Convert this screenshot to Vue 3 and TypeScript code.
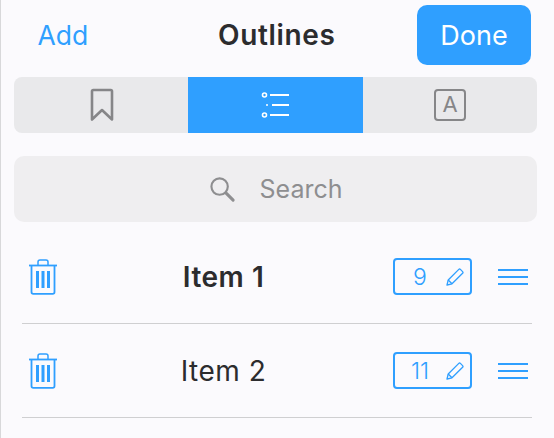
<script setup lang="ts">
const items = [
  { name: 'Item 1', count: 9, bold: true },
  { name: 'Item 2', count: 11, bold: false },
];
</script>

<template>
  <div class="page">
    <header class="top">
      <span class="add">Add</span>
      <span class="title">Outlines</span>
      <button class="done">Done</button>
    </header>

    <div class="tabs">
      <div class="tab">
        <svg class="bookmark" width="26" height="34" viewBox="0 0 26 34" fill="none" stroke="#868688" stroke-width="2.600" stroke-linejoin="round">
          <path d="M3 3.200q0-1.200 1.200-1.200h17.600q1.200 0 1.200 1.200v28.300l-10-9.500-10 9.500z" />
        </svg>
      </div>
      <div class="tab active">
        <svg width="30" height="26" viewBox="0 0 30 26" fill="none" stroke="#fff">
          <circle cx="3.500" cy="3" r="2" stroke-width="1.600" />
          <circle cx="6" cy="13" r="1" fill="#fff" stroke="none" />
          <circle cx="3.500" cy="23" r="2" stroke-width="1.600" />
          <path d="M9 3h19M11 13h17M9 23h19" stroke-width="2.200" />
        </svg>
      </div>
      <div class="tab">
        <div class="font-icon">A</div>
      </div>
    </div>

    <div class="search">
      <svg width="27" height="27" viewBox="0 0 28 28" fill="none" stroke="#8e8e90">
        <circle cx="11" cy="11" r="8.500" stroke-width="2.200" />
        <path d="M17.500 17.500l7.500 7.500" stroke-width="3.200" stroke-linecap="round" />
      </svg>
      <span>Search</span>
    </div>

    <ul class="list">
      <li v-for="item in items" :key="item.name" class="row">
        <svg class="trash" width="30" height="36" viewBox="0 0 30 36" fill="none" stroke="#2f9fff" stroke-width="1.800">
          <path d="M1 6.500h28" />
          <path d="M10 6v-3q0-2 2-2h6q2 0 2 2v3" stroke-width="1.500" />
          <path d="M3.500 7v26q0 1.800 1.800 1.800h19.400q1.800 0 1.800-1.800v-26" />
          <path d="M9.500 12v17M15 12v17M20.500 12v17" stroke-width="3" />
        </svg>
        <span class="name" :class="{ bold: item.bold }">{{ item.name }}</span>
        <div class="count">
          <span class="num">{{ item.count }}</span>
          <svg width="18" height="18" viewBox="0 0 18 18" fill="none" stroke="#2f9fff" stroke-width="1.300" stroke-linejoin="round">
            <path d="M1 17l1.200-5L12.800 1.400q.8-.8 1.600 0l2.200 2.200q.8.8 0 1.600L6 15.800z" />
            <path d="M2.200 12L6 15.800" />
          </svg>
        </div>
        <div class="drag">
          <i></i><i></i><i></i>
        </div>
      </li>
    </ul>
  </div>
</template>

<style scoped>
.page {
  box-sizing: border-box;
  width: 554px;
  height: 438px;
  overflow: hidden;
  padding: 5px 17px 0 14px;
  background: #fbfafd;
  box-shadow: inset 1px 0 0 #d8d8da;
  font-family: Inter, "Noto Sans", sans-serif;
  color: #2c2c2e;
}
.top {
  display: flex;
  align-items: center;
  height: 60px;
  padding-left: 23.500px;
  padding-right: 6px;
}
.add {
  width: 130px;
  margin-right: 50.500px;
  font-size: 26.500px;
  color: #2f9fff;
}
.title {
  flex: 1;
  font-size: 28px;
  font-weight: 600;
  letter-spacing: 0.65px;
}
.done {
  width: 114px;
  height: 60px;
  border: 0;
  padding: 0;
  border-radius: 10px;
  background: #2f9fff;
  color: #fff;
  font: inherit;
  font-size: 27px;
}
.tabs {
  display: grid;
  grid-template-columns: 174px 175px 174px;
  height: 56px;
  margin-top: 12px;
  border-radius: 8px;
  overflow: hidden;
  background: #e9e9eb;
}
.tab {
  display: flex;
  align-items: center;
  justify-content: center;
}
.tab.active {
  background: #2f9fff;
}
.bookmark {
  margin-left: 2px;
}
.font-icon {
  box-sizing: border-box;
  width: 32px;
  height: 32px;
  border: 2.600px solid #868688;
  border-radius: 4px;
  text-align: center;
  font-size: 22px;
  line-height: 27px;
  color: #868688;
}
.search {
  display: flex;
  align-items: center;
  justify-content: center;
  gap: 24px;
  height: 66px;
  margin-top: 23px;
  border-radius: 10px;
  background: #efeef0;
  color: #8e8e90;
  font-size: 25px;
}
.list {
  list-style: none;
  margin: 0;
  padding: 8px 0 0 8px;
  width: 510px;
}
.row {
  display: flex;
  align-items: center;
  height: 93px;
  border-bottom: 1px solid #cfcfd1;
}
.trash {
  margin-left: 6px;
  flex: none;
}
.name {
  width: 331px;
  margin-right: 4px;
  text-align: center;
  font-size: 28px;
  letter-spacing: 0.5px;
}
.name.bold {
  font-weight: 600;
}
.count {
  box-sizing: border-box;
  display: flex;
  align-items: center;
  justify-content: space-between;
  width: 79px;
  height: 37px;
  padding: 0 6px 0 0;
  border: 2px solid #2f9fff;
  border-radius: 4px;
  color: #2f9fff;
  font-size: 23px;
  font-weight: 300;
}
.num {
  width: 50px;
  text-align: center;
}
.drag {
  display: flex;
  flex-direction: column;
  gap: 5px;
  width: 30px;
  margin-left: 26px;
  margin-right: -28px;
}
.drag i {
  display: block;
  height: 2px;
  background: #2f9fff;
}
</style>
